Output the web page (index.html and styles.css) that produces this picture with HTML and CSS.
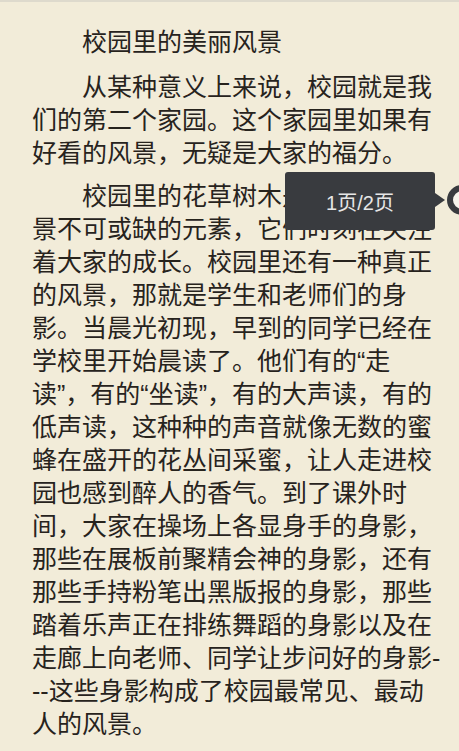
FILE: index.html
```html
<!DOCTYPE html>
<html lang="zh-CN">
    <head>
        <meta charset="utf-8">
        <link rel="stylesheet" href="styles.css">
        <title>校园里的美丽风景</title>
    </head>
    <body>
        <div class="page">
            <p class="title">校园里的美丽风景</p>
            <p class="para">从某种意义上来说，校园就是我<br>们的第二个家园。这个家园里如果有<br>好看的风景，无疑是大家的福分。</p>
            <p class="para">校园里的花草树木是校园美丽风<br>景不可或缺的元素，它们时刻在关注<br>着大家的成长。校园里还有一种真正<br>的风景，那就是学生和老师们的身<br>影。当晨光初现，早到的同学已经在<br>学校里开始晨读了。他们有的“走<br>读”，有的“坐读”，有的大声读，有的<br>低声读，这种种的声音就像无数的蜜<br>蜂在盛开的花丛间采蜜，让人走进校<br>园也感到醉人的香气。到了课外时<br>间，大家在操场上各显身手的身影，<br>那些在展板前聚精会神的身影，还有<br>那些手持粉笔出黑版报的身影，那些<br>踏着乐声正在排练舞蹈的身影以及在<br>走廊上向老师、同学让步问好的身影-<br>--这些身影构成了校园最常见、最动<br>人的风景。</p>
        </div>
        <div class="pager">1页/2页</div>
        <div class="pager-arrow"></div>
        <div class="knob"></div>
    </body>
</html>
```

FILE: styles.css
```css
html, body {
    margin: 0;
    height: 100%;
}
body {
    background: #f2ecd9;
    border-top: 2px solid #dedacd;
    box-sizing: border-box;
    overflow: hidden;
}
.page {
    padding: 24px 0 0 32px;
    font-family: "Liberation Sans", "Noto Sans CJK SC", sans-serif;
    font-size: 25px;
    line-height: 33px;
    color: #27231d;
    white-space: nowrap;
}
.title {
    margin: 0 0 12px;
    text-indent: 2em;
}
.para {
    margin: 0 0 10px;
    text-indent: 2em;
}
.pager {
    position: absolute;
    top: 172px;
    left: 285px;
    width: 150px;
    height: 58px;
    border-radius: 3px;
    background: #393b3f;
    color: #e6e6e6;
    font-family: "Liberation Sans", "Noto Sans CJK SC", sans-serif;
    font-size: 20px;
    display: flex;
    align-items: center;
    justify-content: center;
}
.pager-arrow {
    position: absolute;
    top: 193px;
    left: 435px;
    border-top: 7px solid transparent;
    border-bottom: 7px solid transparent;
    border-left: 10px solid #393b3f;
}
.knob {
    position: absolute;
    top: 185px;
    left: 447px;
    width: 18px;
    height: 18px;
    border: 6px solid #393b3f;
    border-radius: 50%;
    background: #f7f4ec;
}
```
